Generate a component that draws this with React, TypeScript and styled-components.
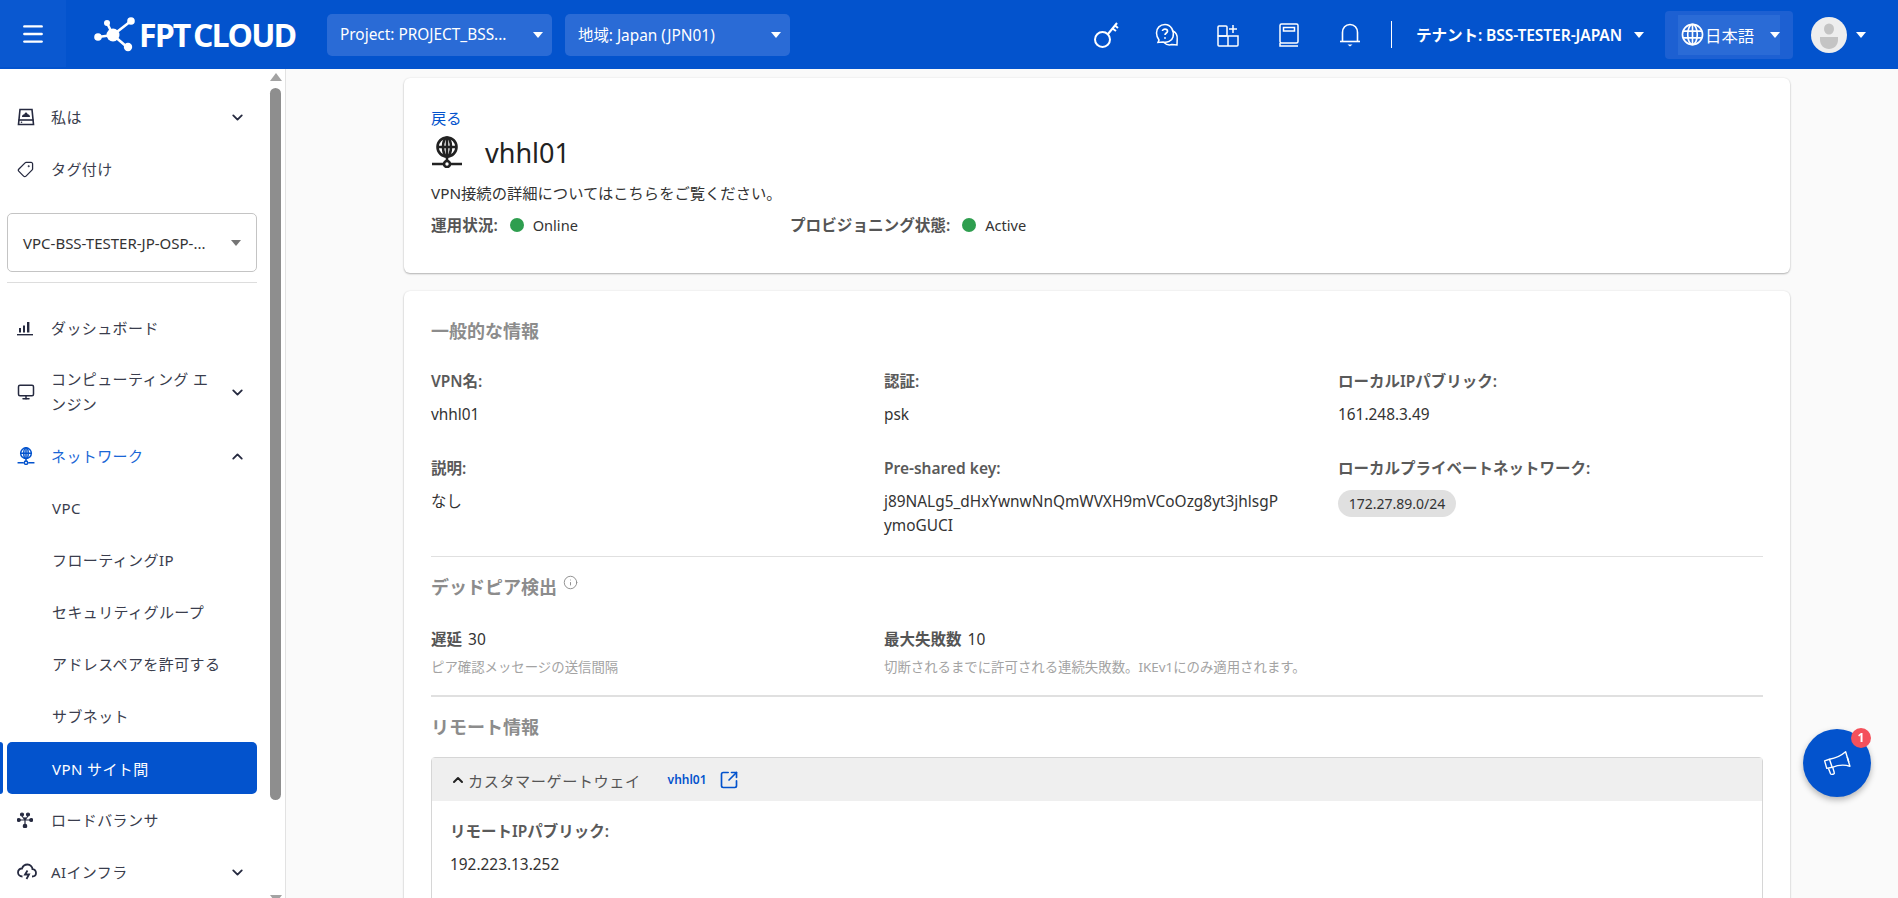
import styled, { createGlobalStyle } from 'styled-components'
import { ChevronDown, ChevronUp, Monitor, Tag, Info, SquareArrowOutUpRight, Menu } from 'lucide-react'

const Global = createGlobalStyle`
  html, body {
    margin: 0;
    padding: 0;
    height: 100%;
    overflow: hidden;
    background: #fafafa;
    font-family: "Noto Sans", "Noto Sans CJK JP", sans-serif;
    font-size: 15px;
    color: #333;
  }
  * {
    box-sizing: border-box;
  }
`

const Page = styled.div`
  height: 100vh;
  display: flex;
  flex-direction: column;
  overflow: hidden;
`

const Header = styled.header`
  height: 69px;
  flex: none;
  display: flex;
  align-items: center;
  background: #0353cd;
  color: #fff;
  padding-right: 32px;
`

const MenuButton = styled.button`
  width: 66px;
  height: 67px;
  align-self: flex-start;
  border: 0;
  padding: 0;
  background: #0a58d0;
  color: #fff;
  display: flex;
  align-items: center;
  justify-content: center;
`

const Logo = styled.div`
  width: 261px;
  padding-left: 27px;
  display: flex;
  align-items: center;
  gap: 0;
`

const LogoText = styled.span`
  font-family: "Open Sans", sans-serif;
  font-weight: 700;
  font-size: 32px;
  line-height: 1;
  letter-spacing: -1.9px;
  word-spacing: -3px;
  white-space: nowrap;
`

const HeaderSelect = styled.div`
  width: 225px;
  height: 42px;
  margin-right: 13px;
  padding: 0 9px 0 13px;
  border-radius: 5px;
  background: #2a6bd6;
  display: flex;
  align-items: center;
  justify-content: space-between;
  font-size: 15.4px;
  white-space: nowrap;
`

const Caret = styled.span<{ $color?: string }>`
  flex: none;
  width: 0;
  height: 0;
  border-left: 5px solid transparent;
  border-right: 5px solid transparent;
  border-top: 6px solid ${p => p.$color || '#fff'};
`

const HeaderRight = styled.div`
  margin-left: auto;
  display: flex;
  align-items: center;
`

const IconCell = styled.div`
  width: 61px;
  display: flex;
  justify-content: center;
  align-items: center;
`

const VDivider = styled.div`
  width: 1px;
  height: 27px;
  background: #fff;
  margin-left: 10px;
  margin-right: 24px;
`

const Tenant = styled.div`
  display: flex;
  align-items: center;
  gap: 12px;
  font-weight: 600;
  font-size: 15.6px;
  letter-spacing: -0.1px;
  margin-right: 21px;
  white-space: nowrap;
`

const LangBox = styled.div`
  width: 128px;
  height: 48px;
  padding: 4px 13px;
  border-radius: 4px;
  background: #1d60d2;
  display: flex;
`

const LangInner = styled.div`
  flex: 1;
  background: #2a6bd6;
  display: flex;
  align-items: center;
  padding-left: 3px;
  gap: 1px;
  font-size: 16.4px;
`

const LangLabel = styled.span`
  flex: 1;
`

const Avatar = styled.div`
  width: 36px;
  height: 36px;
  margin-left: 18px;
  margin-right: 9px;
  border-radius: 50%;
  background: #eeeeee;
  display: flex;
  align-items: flex-end;
  justify-content: center;
  overflow: hidden;
  padding-bottom: 4px;
`

const Body = styled.div`
  flex: 1;
  min-height: 0;
  display: flex;
`

const Sidebar = styled.aside`
  width: 286px;
  flex: none;
  display: flex;
  background: #fff;
  border-right: 1px solid #e2e2e2;
  overflow: hidden;
`

const SideContent = styled.nav`
  width: 270px;
  flex: none;
  padding-top: 22px;
`

const SideItem = styled.div<{ $active?: boolean; $tall?: boolean }>`
  height: ${p => (p.$tall ? 76 : 52)}px;
  padding: 0 24px 0 17px;
  display: flex;
  align-items: center;
  color: ${p => (p.$active ? '#1a66d6' : '#3a3d4d')};
  letter-spacing: 0.4px;
`

const SideIcon = styled.span`
  width: 34px;
  flex: none;
  display: flex;
  align-items: center;
  color: #262a40;
`

const SideLabel = styled.span`
  line-height: 25px;
  max-width: 163px;
`

const Chevron = styled.span`
  margin-left: auto;
  display: flex;
  color: #262a40;
`

const SideSelect = styled.div`
  width: 250px;
  height: 59px;
  margin: 18px 0 0 7px;
  padding: 0 15px 0 15px;
  border: 1px solid #c4c4c4;
  border-radius: 5px;
  display: flex;
  align-items: center;
  justify-content: space-between;
  white-space: nowrap;
  color: #333;
`

const SideDivider = styled.hr`
  width: 250px;
  margin: 10px 0 19px 7px;
  border: 0;
  border-top: 1px solid #ddd;
`

const SubItem = styled.div`
  height: 52px;
  padding: 0 0 1px 52px;
  display: flex;
  align-items: center;
  color: #3a3d4d;
  letter-spacing: 0.4px;
`

const ActiveRow = styled.div`
  width: 257px;
  height: 52px;
  display: flex;
  gap: 4px;
`

const ActiveMark = styled.div`
  width: 3px;
  background: #0353cd;
  border-radius: 0 3px 3px 0;
`

const ActiveItem = styled.div`
  flex: 1;
  padding-left: 45px;
  border-radius: 5px;
  background: #0353cd;
  color: #fff;
  display: flex;
  align-items: center;
  letter-spacing: 0.4px;
`

const Rail = styled.div`
  width: 11px;
  flex: none;
  padding-top: 4px;
  display: flex;
  flex-direction: column;
  align-items: center;
`

const RailArrow = styled.span<{ $down?: boolean }>`
  width: 0;
  height: 0;
  border-left: 6px solid transparent;
  border-right: 6px solid transparent;
  ${p => (p.$down ? 'border-top' : 'border-bottom')}: 8px solid #a3a3a3;
  ${p => (p.$down ? 'margin-top: auto; margin-bottom: -5px;' : '')}
`

const RailThumb = styled.div`
  width: 11px;
  height: 712px;
  margin-top: 7px;
  border-radius: 6px;
  background: #8e8e8e;
`

const Main = styled.main`
  flex: 1;
  min-width: 0;
  padding: 9px 108px 0 118px;
  overflow: hidden;
`

const Card = styled.section`
  background: #fff;
  border-radius: 6px;
  box-shadow: 0 1px 2px rgba(0, 0, 0, 0.28), 0 0 2px rgba(0, 0, 0, 0.08);
  padding: 30px 27px 0;
`

const HeadCard = styled(Card)`
  height: 195px;
  margin-bottom: 18px;
`

const InfoCard = styled(Card)`
  padding-top: 28px;
  padding-bottom: 40px;
`

const BackLink = styled.a`
  display: block;
  color: #0353cd;
  font-size: 15.3px;
  line-height: 20px;
`

const TitleRow = styled.div`
  margin-top: 8px;
  height: 32px;
  display: flex;
  align-items: center;
  gap: 22px;
`

const Title = styled.h1`
  margin: 0;
  font-size: 27px;
  font-weight: 400;
  color: #222;
`

const Description = styled.p`
  margin: 14px 0 0;
  font-size: 15.3px;
  line-height: 22px;
`

const StatusRow = styled.div`
  margin-top: 10px;
  display: grid;
  grid-template-columns: 359px 1fr;
  line-height: 22px;
`

const Status = styled.div`
  display: flex;
  align-items: center;
`

const StatusLabel = styled.span`
  font-weight: 600;
  color: #555;
  margin-right: 12px;
  font-size: 15.6px;
`

const Dot = styled.span`
  width: 14px;
  height: 14px;
  border-radius: 50%;
  background: #2e9e4f;
  margin-right: 9px;
`

const StatusValue = styled.span`
  font-size: 14.6px;
`

const SectionTitle = styled.h2`
  margin: 0;
  font-size: 18px;
  line-height: 24px;
  font-weight: 700;
  color: #8c8c8c;
  display: flex;
  gap: 6px;
`

const Fields = styled.div`
  margin-top: 26px;
  display: grid;
  grid-template-columns: 453px 454px 1fr;
  row-gap: 29px;
`

const Label = styled.div`
  font-weight: 600;
  line-height: 24px;
  color: #5a5a5a;
  font-size: 15.5px;
`

const Value = styled.div`
  margin-top: 10px;
  line-height: 24px;
  font-size: 15.4px;
  color: #333;
  max-width: 397px;
  overflow-wrap: anywhere;
`

const Chip = styled.span`
  margin-top: 10px;
  display: block;
  width: 118px;
  height: 27px;
  line-height: 27px;
  text-align: center;
  border-radius: 14px;
  background: #e0e0e0;
  font-size: 14px;
`

const Rule = styled.hr<{ $thick?: boolean }>`
  margin: ${p => (p.$thick ? 19 : 18)}px 0 18px;
  border: 0;
  border-top: ${p => (p.$thick ? 2 : 1)}px solid #e0e0e0;
`

const Detect = styled.div`
  margin-top: 28px;
  display: grid;
  grid-template-columns: 453px 1fr;
`

const DetectValue = styled.div`
  line-height: 24px;
  font-weight: 600;
  color: #555;
  font-size: 15.5px;
`

const DetectNumber = styled.span`
  font-weight: 400;
  color: #333;
  margin-left: 6px;
`

const Hint = styled.div`
  margin-top: 7px;
  font-size: 13.4px;
  line-height: 18px;
  color: #a3a3a3;
`

const Accordion = styled.div`
  margin-top: 18px;
  border: 1px solid #d6d6d6;
  border-radius: 4px;
`

const AccordionHead = styled.div`
  height: 43px;
  padding-left: 18px;
  background: #efefef;
  display: flex;
  align-items: center;
  gap: 2px;
  font-size: 15.2px;
  color: #555;
  letter-spacing: 0.5px;
`

const AccordionLink = styled.a`
  margin-left: 25px;
  margin-right: 10px;
  color: #0353cd;
  font-size: 12px;
  font-weight: 600;
  letter-spacing: 0;
`

const AccordionBody = styled.div`
  padding: 18px 18px;
  min-height: 180px;
`

const Fab = styled.button`
  position: fixed;
  left: 1803px;
  top: 729px;
  width: 68px;
  height: 68px;
  padding: 0;
  border: 0;
  border-radius: 50%;
  background: #0353cd;
  color: #fff;
  box-shadow: 0 3px 6px rgba(0, 0, 0, 0.28);
  display: flex;
  align-items: center;
  justify-content: center;
`

const Badge = styled.span`
  position: absolute;
  right: 0;
  top: -1px;
  width: 20px;
  height: 20px;
  border-radius: 50%;
  background: #f4515b;
  font: 700 12px/20px "Noto Sans", sans-serif;
  color: #fff;
`

const LogoMark = () => (
  <svg width="46" height="36" viewBox="0 0 46 36" fill="#fff" stroke="#fff">
    <path d="M20 18 L38 4 M20 18 L14 6 M20 18 L5 20 M20 18 L34 30" strokeWidth="2.6" fill="none" />
    <circle cx="20" cy="18" r="6.5" stroke="none" />
    <circle cx="38" cy="4" r="3.8" stroke="none" />
    <circle cx="14" cy="6" r="3" stroke="none" />
    <circle cx="5" cy="20" r="3.8" stroke="none" />
    <circle cx="35" cy="30" r="4.2" stroke="none" />
  </svg>
)

const KeyIcon = () => (
  <svg width="26" height="28" viewBox="0 0 26 28" fill="none" stroke="#fff" strokeWidth="2">
    <circle cx="9.5" cy="18.5" r="7.5" />
    <path d="M15 13 L24 2 M19.5 7.5 L23 10 M22 4.5 L25 7" />
  </svg>
)

const HelpIcon = () => (
  <svg width="24" height="24" viewBox="0 0 24 24" fill="none" stroke="#fff" strokeWidth="1.5">
    <path d="M10 1.5 C5 1.5 1.5 5 1.5 10 C1.5 13 2.5 15 4 17 L3 19.5 L8 19 C12 20 17 18 18 14 C19.5 8 16 1.5 10 1.5 Z" />
    <path d="M18 8 C21 9.5 22.5 12 22.2 16 L22 22 L17 21.5 C14 22.5 11 21.5 9 19.5" />
    <path d="M7.5 8 C7.5 5.5 12.5 5.5 12.5 8.2 C12.5 10 10 10 10 12" strokeWidth="1.7" />
    <circle cx="10" cy="15" r="0.9" fill="#fff" stroke="none" />
  </svg>
)

const BoardIcon = () => (
  <svg width="22" height="24" viewBox="0 0 22 24" fill="none" stroke="#fff" strokeWidth="1.5">
    <rect x="1" y="3" width="9" height="10" rx="1" />
    <path d="M1 13 H21 V22 a1 1 0 0 1 -1 1 H2 a1 1 0 0 1 -1 -1 Z M11 13 V23" />
    <path d="M16 2 V10 M12 6 H20" />
  </svg>
)

const BookIcon = () => (
  <svg width="20" height="24" viewBox="0 0 20 24" fill="none" stroke="#fff" strokeWidth="1.5">
    <rect x="1" y="1" width="18" height="19" rx="1.5" />
    <rect x="4.5" y="4.5" width="11" height="3.5" />
    <path d="M1 20 V23 H19" />
  </svg>
)

const BellIcon = () => (
  <svg width="22" height="24" viewBox="0 0 22 24" fill="none" stroke="#fff" strokeWidth="1.6">
    <path d="M3.5 18 V9.5 C3.5 5 6.5 1.5 11 1.5 C15.5 1.5 18.5 5 18.5 9.5 V18" />
    <path d="M1 18.5 H21" />
    <path d="M8.5 21.5 H13.5 L11 23.5 Z" fill="#fff" stroke="none" />
  </svg>
)

const GlobeIcon = ({ size, color }: { size: number; color: string }) => (
  <svg width={size} height={size} viewBox="0 0 24 24" fill="none" stroke={color} strokeWidth="1.7">
    <circle cx="12" cy="12" r="10.5" />
    <ellipse cx="12" cy="12" rx="5" ry="10.5" />
    <path d="M2 8.5 H22 M2 15.5 H22 M12 1.5 V22.5" />
  </svg>
)

const NetworkIcon = ({ size, color }: { size: number; color: string }) => (
  <svg width={size} height={size} viewBox="0 0 32 32" fill="none" stroke={color} strokeWidth="2.6">
    <circle cx="16" cy="11" r="9.5" />
    <ellipse cx="16" cy="11" rx="4" ry="9.5" />
    <path d="M6.5 11 H25.5 M16 1.5 V26" />
    <path d="M1 28 H12 M20 28 H31" />
    <circle cx="16" cy="28" r="3" />
  </svg>
)

const AvatarFace = () => (
  <svg width="18" height="26" viewBox="0 0 18 26" fill="#c4c4c4">
    <ellipse cx="9" cy="6" rx="5" ry="5.5" />
    <path d="M0 14 H18 V17 C18 22 14 26 9 26 C4 26 0 22 0 17 Z" />
  </svg>
)

const DriveIcon = () => (
  <svg width="18" height="18" viewBox="0 0 18 18" fill="none" stroke="#262a40" strokeWidth="1.6">
    <path d="M3 1.5 H15 L16.5 16.5 H1.5 Z" />
    <path d="M1.5 12 H16.5" />
    <path d="M5 9 C5 6.5 7 6.5 7.5 6 C8 4 10 4 10.5 6 C11 6.5 13 6.5 13 9 Z" fill="#262a40" stroke="none" />
    <circle cx="4.5" cy="14.2" r="0.8" fill="#262a40" stroke="none" />
  </svg>
)

const ChartIcon = () => (
  <svg width="16" height="16" viewBox="0 0 16 16" fill="#262a40">
    <rect x="2" y="8" width="2" height="4.5" />
    <rect x="6" y="5.5" width="2" height="7" />
    <rect x="10" y="2" width="2.4" height="10.5" />
    <rect x="0" y="14" width="16" height="1.4" />
  </svg>
)

const BalancerIcon = () => (
  <svg width="16" height="16" viewBox="0 0 16 16" fill="#262a40" stroke="#262a40" strokeWidth="1.2">
    <circle cx="5" cy="2.5" r="1.5" />
    <circle cx="11" cy="2.5" r="1.5" />
    <circle cx="1.8" cy="8" r="1.5" />
    <circle cx="14.2" cy="8" r="1.5" />
    <circle cx="8" cy="14" r="1.7" />
    <path d="M8 5 V12 M3 8 H13 M5 4 L8 8 L11 4" fill="none" />
  </svg>
)

const CloudBoltIcon = () => (
  <svg width="20" height="20" viewBox="0 0 20 20" fill="none" stroke="#262a40" strokeWidth="1.8">
    <path d="M5.5 14.5 C2.5 14.5 1 12.5 1 10.3 C1 8 3 6.3 5 6.5 C6 3.5 8.5 2.5 10.5 2.5 C13.5 2.5 15.5 5 15.5 7.2 C17.5 7.5 19 9 19 11 C19 13 17.5 14.5 15 14.5" />
    <path d="M10.5 8.5 L8 12.5 H12 L9.5 17" />
  </svg>
)

const MegaphoneIcon = () => (
  <svg width="28" height="26" viewBox="0 0 26 24" fill="none" stroke="#fff" strokeWidth="1.3" strokeLinejoin="round">
    <path d="M1.5 10 L6 8.5 L8.5 16 L3.5 17 Z" />
    <path d="M6 8.5 C12 7.5 17 5 21 1.5 L25 15 C20 13.5 14 13.8 8.5 16" />
    <path d="M22.5 6.5 L24 11" />
    <path d="M5 16.8 L7 22 C7.5 23 11 22.5 10.5 21 L9 15.8" />
  </svg>
)

const subItems = ['VPC', 'フローティングIP', 'セキュリティグループ', 'アドレスペアを許可する', 'サブネット']

export default function App() {
  return (
    <Page>
      <Global />
      <Header>
        <MenuButton aria-label="menu">
          <Menu size={26} strokeWidth={2.2} />
        </MenuButton>
        <Logo>
          <LogoMark />
          <LogoText>FPT CLOUD</LogoText>
        </Logo>
        <HeaderSelect>
          Project: PROJECT_BSS...
          <Caret />
        </HeaderSelect>
        <HeaderSelect>
          地域: Japan (JPN01)
          <Caret />
        </HeaderSelect>
        <HeaderRight>
          <IconCell><KeyIcon /></IconCell>
          <IconCell><HelpIcon /></IconCell>
          <IconCell><BoardIcon /></IconCell>
          <IconCell><BookIcon /></IconCell>
          <IconCell><BellIcon /></IconCell>
          <VDivider />
          <Tenant>
            テナント: BSS-TESTER-JAPAN
            <Caret />
          </Tenant>
          <LangBox>
            <LangInner>
              <GlobeIcon size={23} color="#fff" />
              <LangLabel>日本語</LangLabel>
              <Caret />
            </LangInner>
          </LangBox>
          <Avatar><AvatarFace /></Avatar>
          <Caret />
        </HeaderRight>
      </Header>
      <Body>
        <Sidebar>
          <SideContent>
            <SideItem>
              <SideIcon><DriveIcon /></SideIcon>
              <SideLabel>私は</SideLabel>
              <Chevron><ChevronDown size={17} strokeWidth={2.6} /></Chevron>
            </SideItem>
            <SideItem>
              <SideIcon><Tag size={17} strokeWidth={1.8} transform="scale(-1 1)" /></SideIcon>
              <SideLabel>タグ付け</SideLabel>
            </SideItem>
            <SideSelect>
              VPC-BSS-TESTER-JP-OSP-...
              <Caret $color="#757575" />
            </SideSelect>
            <SideDivider />
            <SideItem>
              <SideIcon><ChartIcon /></SideIcon>
              <SideLabel>ダッシュボード</SideLabel>
            </SideItem>
            <SideItem $tall>
              <SideIcon><Monitor size={18} strokeWidth={2} /></SideIcon>
              <SideLabel>コンピューティング エンジン</SideLabel>
              <Chevron><ChevronDown size={17} strokeWidth={2.6} /></Chevron>
            </SideItem>
            <SideItem $active>
              <SideIcon><NetworkIcon size={18} color="#0353cd" /></SideIcon>
              <SideLabel>ネットワーク</SideLabel>
              <Chevron><ChevronUp size={17} strokeWidth={2.6} /></Chevron>
            </SideItem>
            {subItems.map(s => (
              <SubItem key={s}>{s}</SubItem>
            ))}
            <ActiveRow>
              <ActiveMark />
              <ActiveItem>VPN サイト間</ActiveItem>
            </ActiveRow>
            <SideItem>
              <SideIcon><BalancerIcon /></SideIcon>
              <SideLabel>ロードバランサ</SideLabel>
            </SideItem>
            <SideItem>
              <SideIcon><CloudBoltIcon /></SideIcon>
              <SideLabel>AIインフラ</SideLabel>
              <Chevron><ChevronDown size={17} strokeWidth={2.6} /></Chevron>
            </SideItem>
          </SideContent>
          <Rail>
            <RailArrow />
            <RailThumb />
            <RailArrow $down />
          </Rail>
        </Sidebar>
        <Main>
          <HeadCard>
            <BackLink>戻る</BackLink>
            <TitleRow>
              <NetworkIcon size={32} color="#222" />
              <Title>vhhl01</Title>
            </TitleRow>
            <Description>VPN接続の詳細についてはこちらをご覧ください。</Description>
            <StatusRow>
              <Status>
                <StatusLabel>運用状況:</StatusLabel>
                <Dot />
                <StatusValue>Online</StatusValue>
              </Status>
              <Status>
                <StatusLabel>プロビジョニング状態:</StatusLabel>
                <Dot />
                <StatusValue>Active</StatusValue>
              </Status>
            </StatusRow>
          </HeadCard>
          <InfoCard>
            <SectionTitle>一般的な情報</SectionTitle>
            <Fields>
              <div>
                <Label>VPN名:</Label>
                <Value>vhhl01</Value>
              </div>
              <div>
                <Label>認証:</Label>
                <Value>psk</Value>
              </div>
              <div>
                <Label>ローカルIPパブリック:</Label>
                <Value>161.248.3.49</Value>
              </div>
              <div>
                <Label>説明:</Label>
                <Value>なし</Value>
              </div>
              <div>
                <Label>Pre-shared key:</Label>
                <Value>j89NALg5_dHxYwnwNnQmWVXH9mVCoOzg8yt3jhlsgPymoGUCI</Value>
              </div>
              <div>
                <Label>ローカルプライベートネットワーク:</Label>
                <Chip>172.27.89.0/24</Chip>
              </div>
            </Fields>
            <Rule />
            <SectionTitle>
              デッドピア検出
              <Info size={15} strokeWidth={1.5} />
            </SectionTitle>
            <Detect>
              <div>
                <DetectValue>遅延<DetectNumber>30</DetectNumber></DetectValue>
                <Hint>ピア確認メッセージの送信間隔</Hint>
              </div>
              <div>
                <DetectValue>最大失敗数<DetectNumber>10</DetectNumber></DetectValue>
                <Hint>切断されるまでに許可される連続失敗数。IKEv1にのみ適用されます。</Hint>
              </div>
            </Detect>
            <Rule $thick />
            <SectionTitle>リモート情報</SectionTitle>
            <Accordion>
              <AccordionHead>
                <ChevronUp size={16} strokeWidth={3} color="#222" />
                カスタマーゲートウェイ
                <AccordionLink>vhhl01</AccordionLink>
                <SquareArrowOutUpRight size={20} color="#0353cd" strokeWidth={2} />
              </AccordionHead>
              <AccordionBody>
                <Label>リモートIPパブリック:</Label>
                <Value>192.223.13.252</Value>
              </AccordionBody>
            </Accordion>
          </InfoCard>
        </Main>
      </Body>
      <Fab aria-label="news">
        <MegaphoneIcon />
        <Badge>1</Badge>
      </Fab>
    </Page>
  )
}
